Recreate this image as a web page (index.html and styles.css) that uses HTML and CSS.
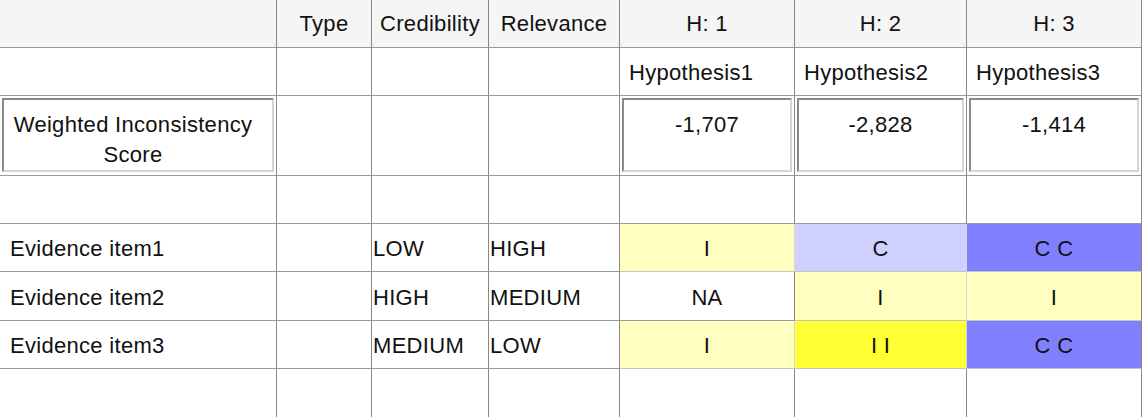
FILE: index.html
```html
<!DOCTYPE html>
<html>
<head>
<meta charset="utf-8">
<link rel="stylesheet" href="styles.css">
</head>
<body>
<div class="grid">
  <div class="c head"></div>
  <div class="c head center">Type</div>
  <div class="c head center">Credibility</div>
  <div class="c head center">Relevance</div>
  <div class="c head center">H: 1</div>
  <div class="c head center">H: 2</div>
  <div class="c head center last">H: 3</div>

  <div class="c"></div>
  <div class="c"></div>
  <div class="c"></div>
  <div class="c"></div>
  <div class="c hyp">Hypothesis1</div>
  <div class="c hyp">Hypothesis2</div>
  <div class="c hyp last">Hypothesis3</div>

  <div class="c wrow"><div class="box label">Weighted Inconsistency Score</div></div>
  <div class="c"></div>
  <div class="c"></div>
  <div class="c"></div>
  <div class="c wrow"><div class="box">-1,707</div></div>
  <div class="c wrow"><div class="box">-2,828</div></div>
  <div class="c wrow last"><div class="box">-1,414</div></div>

  <div class="c"></div>
  <div class="c"></div>
  <div class="c"></div>
  <div class="c"></div>
  <div class="c"></div>
  <div class="c"></div>
  <div class="c last"></div>

  <div class="c ev name">Evidence item1</div>
  <div class="c ev"></div>
  <div class="c ev lvl">LOW</div>
  <div class="c ev lvl">HIGH</div>
  <div class="c ev center col i1">I</div>
  <div class="c ev center col c1">C</div>
  <div class="c ev center col c2 last">C C</div>

  <div class="c ev name">Evidence item2</div>
  <div class="c ev"></div>
  <div class="c ev lvl">HIGH</div>
  <div class="c ev lvl">MEDIUM</div>
  <div class="c ev center">NA</div>
  <div class="c ev center col i1">I</div>
  <div class="c ev center col i1 last">I</div>

  <div class="c ev name">Evidence item3</div>
  <div class="c ev"></div>
  <div class="c ev lvl">MEDIUM</div>
  <div class="c ev lvl">LOW</div>
  <div class="c ev center col i1">I</div>
  <div class="c ev center col i2">I I</div>
  <div class="c ev center col c2 last">C C</div>

  <div class="c end"></div>
  <div class="c end"></div>
  <div class="c end"></div>
  <div class="c end"></div>
  <div class="c end"></div>
  <div class="c end"></div>
  <div class="c end last"></div>
</div>
</body>
</html>
```
FILE: styles.css
```css
html, body {
  margin: 0;
  padding: 0;
  background: #ffffff;
}
body {
  font-family: "Liberation Sans", Arial, sans-serif;
  font-size: 22px;
  letter-spacing: 0.3px;
  color: #111111;
  width: 1142px;
  height: 417px;
  overflow: hidden;
}
.grid {
  display: grid;
  grid-template-columns: 277px 95px 117px 131px 175px 172px 175px;
  grid-template-rows: 48px 48px 80px 48px 48px 49px 48px 60px;
}
.c {
  box-sizing: border-box;
  border-right: 1px solid #888888;
  border-bottom: 1px solid #999999;
  display: flex;
  align-items: center;
  white-space: nowrap;
  overflow: hidden;
}
.head {
  background: #f5f5f5;
}
.center {
  justify-content: center;
}
.hyp {
  padding-left: 9px;
  padding-top: 2px;
}
.ev {
  padding-top: 3px;
}
.name {
  padding-left: 10px;
}
.lvl {
  padding-left: 1px;
}
.end {
  border-bottom: none;
}
.wrow {
  padding: 2px 2px 3px 2px;
  align-items: stretch;
}
.box {
  box-sizing: border-box;
  flex: 1;
  border-top: 2px solid #8a8a8a;
  border-left: 2px solid #8a8a8a;
  border-bottom: 2px solid #d4d4d4;
  border-right: 2px solid #d4d4d4;
  text-align: center;
  white-space: normal;
  line-height: 30px;
  padding: 10px 2px 0 2px;
}
.label {
  padding-right: 12px;
}
.col {
  border-right-color: #d6d6d6;
  border-bottom-color: #c4c4c4;
}
.col.last {
  border-right-color: #888888;
}
.i1 { background: #ffffc0; }
.i2 { background: #ffff33; }
.c1 { background: #d0d0ff; }
.c2 { background: #8080ff; }
```
